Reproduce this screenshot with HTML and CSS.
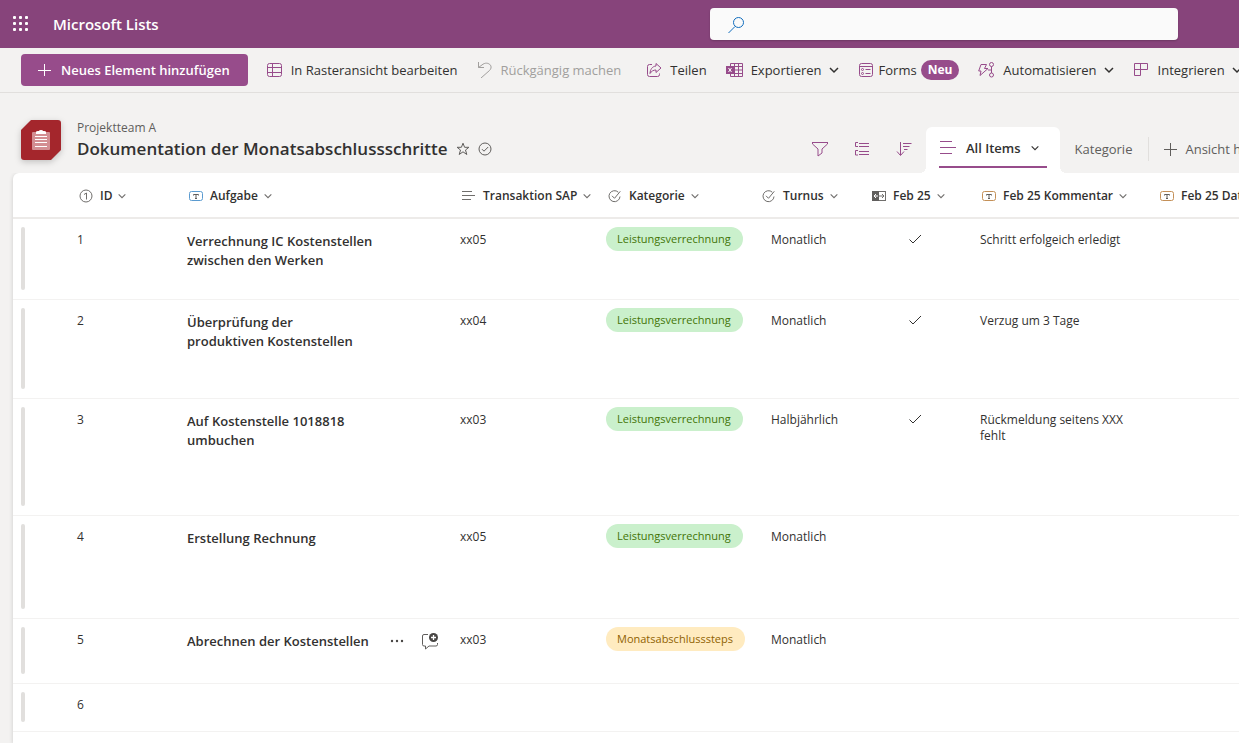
FILE: index.html
```html
<!DOCTYPE html>
<html lang="de">
<head>
<meta charset="utf-8">
<meta name="viewport" content="width=device-width, initial-scale=1">
<title>Dokumentation der Monatsabschlussschritte</title>
<link rel="stylesheet" href="styles.css">
</head>
<body>
<svg class="defs" width="0" height="0" aria-hidden="true">
  <symbol id="chev" viewBox="0 0 12 12"><path d="M2 4l4 4 4-4"/></symbol>
  <symbol id="check-circle" viewBox="0 0 16 16"><path d="M12.300 4.200A5.500 5.500 0 1 0 14 8.500M6 7.800l2.500 2.500 5.800-7"/></symbol>
  <symbol id="text-box" viewBox="0 0 16 16"><rect x="2.500" y="3.500" width="13" height="9" rx="2"/><path d="M6.500 7.500v-1h5v1M9 6.500v4M8 10.500h2" stroke="#605e5c"/></symbol>
  <symbol id="tick" viewBox="0 0 16 16"><path d="M2.500 8.500l3.500 3.500 8-8"/></symbol>
</svg>

<header class="suite">
  <button class="waffle" aria-label="App-Startfeld">
    <svg width="16" height="16" viewBox="0 0 16 16"><g fill="#fff"><rect x="0" y="0" width="3" height="3" rx="1"/><rect x="6" y="0" width="3" height="3" rx="1"/><rect x="12" y="0" width="3" height="3" rx="1"/><rect x="0" y="6" width="3" height="3" rx="1"/><rect x="6" y="6" width="3" height="3" rx="1"/><rect x="12" y="6" width="3" height="3" rx="1"/><rect x="0" y="12" width="3" height="3" rx="1"/><rect x="6" y="12" width="3" height="3" rx="1"/><rect x="12" y="12" width="3" height="3" rx="1"/></g></svg>
  </button>
  <a class="brand" href="#">Microsoft Lists</a>
  <form class="search" role="search">
    <svg width="18" height="18" viewBox="0 0 18 18"><circle cx="10.500" cy="7.500" r="5"/><path d="M7 11.500L.500 18"/></svg>
    <input type="search" aria-label="Suchen">
  </form>
</header>

<nav class="commands" aria-label="Befehle">
  <button class="primary">
    <svg width="14" height="14" viewBox="0 0 14 14"><path d="M7.500 1v12M1 7.500h13"/></svg>Neues Element hinzufügen
  </button>
  <button class="cmd">
    <svg width="16" height="16" viewBox="0 0 16 16"><rect x=".500" y="1.500" width="14" height="13" rx="2"/><path d="M5.500 1.500v13M.500 5.500h14M.500 10.500h14"/></svg>In Rasteransicht bearbeiten
  </button>
  <button class="cmd undo" disabled>
    <svg width="16" height="16" viewBox="0 0 16 16"><path d="M1.500 0v5.500h5.500M1.500 5.500L6 2.200C11-1 17 4 12.500 8.500L4 16"/></svg>Rückgängig machen
  </button>
  <button class="cmd">
    <svg width="16" height="16" viewBox="0 0 16 16"><path d="M6 2.500H3.500a2 2 0 0 0-2 2v8a2 2 0 0 0 2 2h8a2 2 0 0 0 2-2v-1M10 1.500l5 4.500-5 4.500V8C7.500 8 5.500 9 4 11.500 4.300 7.500 6 4.500 10 4z"/></svg>Teilen
  </button>
  <button class="cmd">
    <svg width="17" height="16" viewBox="0 0 17 16"><path d="M4.500 4V1.500h12v13h-12V12M8.500 1.500v13M12.500 1.500v13M4.500 4.500h12M8.500 8h8M4.500 11.500h12"/><rect x="0" y="4" width="8" height="8" fill="#974c8b" stroke="none"/><path d="M2.500 6l3 4M5.500 6l-3 4" stroke="#fff"/></svg>Exportieren<svg class="chev" width="12" height="12"><use href="#chev"/></svg>
  </button>
  <button class="cmd forms">
    <svg width="16" height="16" viewBox="0 0 16 16"><rect x=".500" y="1.500" width="13" height="13" rx="2"/><path d="M.500 4.500h13M6.500 7.500h5M6.500 11.500h5"/><circle cx="3.500" cy="7.500" r="1"/><circle cx="3.500" cy="11.500" r="1"/></svg>Forms<span class="badge">Neu</span>
  </button>
  <button class="cmd">
    <svg width="17" height="16" viewBox="0 0 17 16"><path d="M3 2.500h5.500l-2 4h3.500L2 13.500l1-4.500H.700z"/><circle cx="13.500" cy="2.500" r="2"/><circle cx="13.500" cy="13" r="2"/><path d="M13.500 4.500V11M13.500 8H10"/></svg>Automatisieren<svg class="chev" width="12" height="12"><use href="#chev"/></svg>
  </button>
  <button class="cmd">
    <svg width="16" height="16" viewBox="0 0 16 16"><path d="M.500 1.500h13v6h-7v6h-6zM6.500 1.500v6M.500 7.500h7"/></svg>Integrieren<svg class="chev" width="12" height="12"><use href="#chev"/></svg>
  </button>
</nav>

<section class="heading">
  <svg class="logo" width="40" height="40" viewBox="0 0 40 40"><path d="M10 0H37a3 3 0 0 1 3 3V30L30 40H3a3 3 0 0 1-3-3V10z" fill="#a4262c"/><rect x="11" y="12" width="18" height="18" rx="1" fill="#d38e92"/><path d="M14 16.500h12M14 19.500h12M14 22.500h12M14 26.500h12" stroke="#fff"/><path d="M15 14v-2q0-1 2-1h1q0-1 2-1t2 1h1q2 0 2 1v2z" fill="#fff"/></svg>
  <div class="titles">
    <span class="team">Projektteam A</span>
    <div class="title-row">
      <h1>Dokumentation der Monatsabschlussschritte</h1>
      <button class="plain" aria-label="Favorit"><svg width="14" height="14" viewBox="0 0 14 14"><path d="M7 1.200l1.600 4.100h4.300L9.500 8l1.300 4.500L7 9.800l-3.800 2.700L4.500 8 1.100 5.300h4.300z"/></svg></button>
      <button class="plain" aria-label="Status"><svg width="14" height="14" viewBox="0 0 14 14"><circle cx="7" cy="7" r="6"/><path d="M4 7.200l2 2L10.200 5"/></svg></button>
    </div>
  </div>
  <div class="views">
    <div class="tools">
      <button class="plain" aria-label="Filter"><svg width="18" height="16" viewBox="0 0 18 16"><path d="M1 1.500h16M1.500 1.500v1.500l5.500 5v7l4-3V8l5.500-5V1.500"/></svg></button>
      <button class="plain" aria-label="Gruppieren"><svg width="18" height="16" viewBox="0 0 18 16"><path d="M5 1.500H2.500v4H5M5 9.500H2.500v4.500H5M6 2.500h10M6 5.500h10M6 10.500h10M6 13.500h10"/></svg></button>
      <button class="plain" aria-label="Sortieren"><svg width="18" height="16" viewBox="0 0 18 16"><path d="M5.500 1v13M2 10.500L5.500 14.500 9 10.500M8 2.500h8.500M8 5.500h6.500M9 8.500h3.500"/></svg></button>
    </div>
    <button class="tab active"><span class="tab-label"><svg width="18" height="16" viewBox="0 0 18 16"><path d="M1 1.500h12M1 7.500h16M1 13.500h12"/></svg>All Items<svg class="chev" width="10" height="10" viewBox="0 0 12 12"><use href="#chev"/></svg></span></button>
    <button class="tab">Kategorie</button>
    <button class="tab add"><svg width="14" height="14" viewBox="0 0 14 14"><path d="M7.500 1v13M1 7.500h13"/></svg>Ansicht hinzufügen</button>
  </div>
</section>

<main class="card">
  <table>
    <colgroup><col class="c-bar"><col class="c-id"><col class="c-task"><col class="c-sap"><col class="c-cat"><col class="c-id"><col class="c-id"><col class="c-note"><col></colgroup>
    <thead>
      <tr>
        <td></td>
        <th><span class="head"><svg width="16" height="16" viewBox="0 0 16 16"><circle cx="9" cy="8" r="6"/><path d="M7 6.500L9.500 5v6.500"/></svg>ID<svg class="chev" width="10" height="10"><use href="#chev"/></svg></span></th>
        <th><span class="head blue"><svg width="16" height="16"><use href="#text-box"/></svg>Aufgabe<svg class="chev" width="10" height="10"><use href="#chev"/></svg></span></th>
        <th><span class="head"><svg width="16" height="16" viewBox="0 0 16 16"><path d="M2 3.500h10M2 7.500h13M2 11.500h9"/></svg>Transaktion SAP<svg class="chev" width="10" height="10"><use href="#chev"/></svg></span></th>
        <th><span class="head"><svg width="16" height="16"><use href="#check-circle"/></svg>Kategorie<svg class="chev" width="10" height="10"><use href="#chev"/></svg></span></th>
        <th><span class="head"><svg width="16" height="16"><use href="#check-circle"/></svg>Turnus<svg class="chev" width="10" height="10"><use href="#chev"/></svg></span></th>
        <th><span class="head"><svg width="16" height="16" viewBox="0 0 16 16"><rect x="2.500" y="3.500" width="13" height="9"/><path d="M2 3h7v10H2z" fill="#605e5c" stroke="none"/><path d="M6 6L4 8l2 2M4 8h4" stroke="#fff"/><path d="M9 8h5M12 6l2 2-2 2"/></svg>Feb 25<svg class="chev" width="10" height="10"><use href="#chev"/></svg></span></th>
        <th><span class="head orange"><svg width="16" height="16"><use href="#text-box"/></svg>Feb 25 Kommentar<svg class="chev" width="10" height="10"><use href="#chev"/></svg></span></th>
        <th><span class="head orange"><svg width="16" height="16"><use href="#text-box"/></svg>Feb 25 Datum</span></th>
      </tr>
    </thead>
    <tbody>
      <tr style="--row:81px"><td class="sel"><div class="bar"></div></td><td>1</td><td class="task">Verrechnung IC Kostenstellen zwischen den Werken</td><td>xx05</td><td class="choice"><span class="pill">Leistungsverrechnung</span></td><td class="turn">Monatlich</td><td class="yes"><svg width="16" height="16" role="img" aria-label="Ja"><use href="#tick"/></svg></td><td>Schritt erfolgeich erledigt</td><td></td></tr>
      <tr style="--row:99px"><td class="sel"><div class="bar"></div></td><td>2</td><td class="task">Überprüfung der<br>produktiven Kostenstellen</td><td>xx04</td><td class="choice"><span class="pill">Leistungsverrechnung</span></td><td class="turn">Monatlich</td><td class="yes"><svg width="16" height="16" role="img" aria-label="Ja"><use href="#tick"/></svg></td><td>Verzug um 3 Tage</td><td></td></tr>
      <tr style="--row:117px"><td class="sel"><div class="bar"></div></td><td>3</td><td class="task">Auf Kostenstelle 1018818 umbuchen</td><td>xx03</td><td class="choice"><span class="pill">Leistungsverrechnung</span></td><td class="turn">Halbjährlich</td><td class="yes"><svg width="16" height="16" role="img" aria-label="Ja"><use href="#tick"/></svg></td><td>Rückmeldung seitens XXX fehlt</td><td></td></tr>
      <tr style="--row:103px"><td class="sel"><div class="bar"></div></td><td>4</td><td class="task">Erstellung Rechnung</td><td>xx05</td><td class="choice"><span class="pill">Leistungsverrechnung</span></td><td class="turn">Monatlich</td><td></td><td></td><td></td></tr>
      <tr style="--row:65px"><td class="sel"><div class="bar"></div></td><td>5</td><td class="task with-actions"><div class="task-row"><span class="task-name">Abrechnen der Kostenstellen</span><button class="plain" aria-label="Weitere Aktionen"><svg width="16" height="16" viewBox="0 0 16 16"><g fill="#484644" stroke="none"><circle cx="3" cy="7" r="1.200"/><circle cx="8" cy="7" r="1.200"/><circle cx="13" cy="7" r="1.200"/></g></svg></button><button class="plain" aria-label="Kommentar hinzufügen"><svg width="18" height="18" viewBox="0 0 18 18"><path d="M7 1.500H3a1.500 1.500 0 0 0-1.500 1.500v8.500A1.500 1.500 0 0 0 3 13h1.500v3l3.500-3h7a1.500 1.500 0 0 0 1.500-1.500v-1.500"/><circle cx="12.500" cy="4.500" r="4.500" fill="#484644" stroke="none"/><path d="M12.500 2v5M10 4.500h5" stroke="#fff" stroke-width="1.300"/></svg></button></div></td><td>xx03</td><td class="choice"><span class="pill gold">Monatsabschlusssteps</span></td><td class="turn">Monatlich</td><td></td><td></td><td></td></tr>
      <tr style="--row:48px"><td class="sel"><div class="bar"></div></td><td>6</td><td></td><td></td><td></td><td></td><td></td><td></td><td></td></tr>
    </tbody>
  </table>
</main>
</body>
</html>
```
FILE: styles.css
```css
* { box-sizing: border-box; }
html, body { height: 100%; }
body {
  margin: 0;
  display: flex;
  flex-direction: column;
  overflow: hidden;
  background: #f3f2f1;
  color: #323130;
  font: 12px/16px "Open Sans", "Noto Sans", sans-serif;
}
button { border: 0; padding: 0; background: none; font: inherit; color: inherit; white-space: nowrap; }
svg { fill: none; stroke: currentColor; flex: none; }
.defs { position: absolute; }
.chev { stroke-width: 1.300; }

.suite { display: flex; align-items: center; flex: none; height: 48px; padding: 0 61px 0 13px; background: #87447b; }
.waffle { display: flex; }
.brand { margin-left: 24px; color: #fff; font-size: 15px; font-weight: 600; line-height: 20px; text-decoration: none; }
.waffle svg { stroke: none; }
.search { display: flex; align-items: center; flex: 0 1 468px; height: 32px; margin-left: auto; padding: 0 18px; background: #fafafa; border-radius: 4px; color: #0f6cbd; box-shadow: 0 1px 2px rgba(0, 0, 0, .2); }
.search input { flex: 1; min-width: 0; border: 0; outline: 0; background: none; font: inherit; }

.commands { display: flex; align-items: center; flex: none; gap: 19px; height: 45px; padding: 0 0 0 21px; overflow: hidden; border-bottom: 1px solid #e1dfdd; font-size: 13px; line-height: 20px; }
.commands button { display: flex; align-items: center; flex: none; gap: 8px; }
.commands .primary { gap: 10px; height: 32px; padding: 0 18px 0 16px; border-radius: 4px; background: #974c8b; color: #fff; font-weight: 600; }
.commands .undo { margin-right: 6px; }
.cmd svg { color: #974c8b; }
.cmd .chev { margin-left: -2px; color: #323130; stroke-width: 1.500; }
.cmd:disabled, .cmd:disabled svg { color: #a19f9d; }
.commands .forms { gap: 4px; }
.badge { padding: 0 7px; border-radius: 10px; background: #974c8b; color: #fff; font-weight: 700; font-size: 12px; }

.heading { display: flex; flex: none; height: 80px; padding-left: 21px; overflow: hidden; }
.logo { margin-top: 27px; stroke: none; filter: drop-shadow(0 2px 3px rgba(0, 0, 0, .2)); }
.titles { margin: 27px 0 0 16px; }
.team { display: block; color: #605e5c; }
.title-row { display: flex; align-items: center; gap: 8px; }
h1 { margin: 0; font-size: 17px; line-height: 26px; font-weight: 600; white-space: nowrap; }
.plain { display: flex; color: #605e5c; }
.views { display: flex; flex: none; align-items: flex-end; margin-left: auto; width: 428px; font-size: 13px; line-height: 20px; }
.tools { display: flex; flex: none; gap: 24px; padding: 0 13px 16px 0; }
.tools .plain { color: #974c8b; }
.tab { display: flex; align-items: center; flex: none; height: 48px; color: #605e5c; }
.active { position: relative; height: 46px; padding: 0 13px; margin-right: 15px; background: #fff; border-radius: 6px 6px 0 0; color: #323130; font-weight: 600; }
.active::before, .active::after { content: ""; position: absolute; bottom: 0; width: 6px; height: 6px; }
.active::before { right: 100%; background: radial-gradient(circle at 0 0, transparent 6px, #fff 6px); }
.active::after { left: 100%; background: radial-gradient(circle at 100% 0, transparent 6px, #fff 6px); }
.tab-label { display: flex; align-items: center; gap: 9px; align-self: flex-end; height: 38px; margin-bottom: 5px; border-bottom: 2px solid #974c8b; padding-right: 7px; }
.tab-label svg:first-child { color: #974c8b; }
.add { gap: 8px; height: 24px; margin: 0 0 12px 16px; padding-left: 14px; border-left: 1px solid #e1dfdd; }

.card { flex: 1; margin-left: 13px; background: #fff; border-radius: 6px 0 0 0; box-shadow: 0 1px 4px rgba(0, 0, 0, .16); clip-path: inset(0 0 0 -6px); overflow: hidden; }
table { width: 100%; table-layout: fixed; border-collapse: separate; border-spacing: 0; }
.c-bar { width: 56px; }
.c-id { width: 110px; }
.c-task { width: 273px; }
.c-sap { width: 146px; }
.c-cat { width: 154px; }
.c-note { width: 178px; }
th, td { text-align: left; vertical-align: top; padding: 13px 8px 0; }
thead th, thead td { height: 46px; padding: 2px 8px 0; vertical-align: middle; border-bottom: 2px solid #edebe9; font-weight: 600; }
.head { display: flex; align-items: center; gap: 7px; white-space: nowrap; }
.head svg { color: #706e6c; }
.head .chev { margin-left: -2px; }
.head.blue svg:first-child { color: #5b9bd0; }
.head.orange svg:first-child { color: #c49058; }
tbody td { height: var(--row); border-bottom: 1px solid #f3f2f1; }
.sel { padding: 8px 8px 0; }
.bar { width: 4px; height: calc(var(--row) - 18px); border-radius: 2px; background: #e1dfdd; }
.task { padding-right: 72px; font-size: 13px; line-height: 19px; font-weight: 600; }
.with-actions { padding-right: 0; }
.task-row { display: flex; align-items: center; }
.task-name { flex: 0 0 202px; }
.task-row .plain + .plain { margin-left: 16px; }
.choice { padding-top: 8px; }
.pill { display: inline-block; padding: 4px 12px 4px 11px; border-radius: 12px; background: #caf0cc; color: #437406; font-size: 11px; }
.gold { background: #ffebc0; color: #8f6200; }
.turn { padding-left: 19px; }
.yes { padding: 12px 12px 0 8px; }
.yes svg { display: block; margin: 0 auto; }
```
